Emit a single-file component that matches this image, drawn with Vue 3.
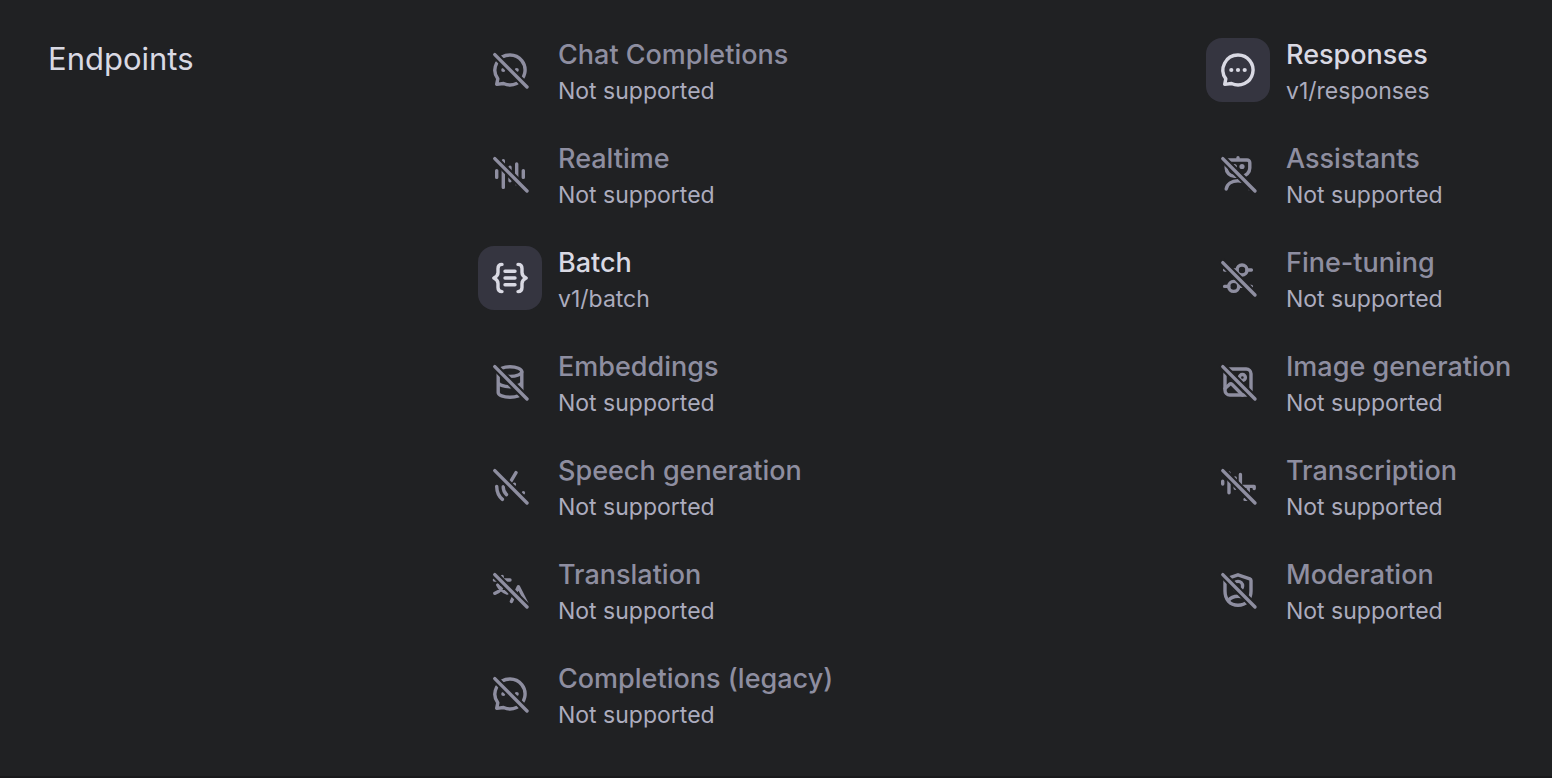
<script setup>
const chat =
  '<path d="M20 5A15 15 0 1 1 13.5 33.5L6.7 34.4L7.8 28.8A15 15 0 0 1 20 5Z"/>' +
  '<g class="solid"><circle cx="13.3" cy="20" r="2.1"/><circle cx="20" cy="20" r="2.1"/><circle cx="26.7" cy="20" r="2.1"/></g>'

const icons = {
  chat,
  realtime: '<path d="M6.7 16.6v6.8M13.3 6.6v26.8M20 13.3v13.4M26.7 9.9v20.2M33.3 16.6v6.8"/>',
  batch:
    '<path d="M12 6.4C9.4 6.4 8 8 8 10.5V14.5C8 17.5 6 19 3.8 20C6 21 8 22.5 8 25.5V29.5C8 32 9.4 33.6 12 33.6"/>' +
    '<path d="M28 6.4C30.6 6.4 32 8 32 10.5V14.5C32 17.5 34 19 36.2 20C34 21 32 22.5 32 25.5V29.5C32 32 30.6 33.6 28 33.6"/>' +
    '<path d="M15 13.3H25M15 20H25M15 26.7H25"/>',
  embeddings:
    '<ellipse cx="20" cy="9.6" rx="11.8" ry="4.8"/>' +
    '<path d="M8.2 10V30.4C8.2 33.2 13.5 35.2 20 35.2S31.8 33.2 31.8 30.4V10M8.2 20C8.2 22.8 13.5 24.8 20 24.8S31.8 22.8 31.8 20"/>',
  speech:
    '<path d="M6.7 20.4C6.8 25.6 8.8 30.4 12.4 33.4M13.2 20.8C13.2 24 14.4 26.8 16.5 28.6M26 6.6L20.8 15.4M24.4 18.2V18.6M33.4 26.6V27"/>',
  translation:
    '<path d="M4.4 10H20M12.2 6.4V10M7.8 15C9.8 19 12.8 21.8 17.2 23M14.4 10C13.6 15.5 11 21.4 4.8 23.3M21.4 31.4L28.4 16.8L36.6 33M24.4 27.4H33"/>',
  assistants:
    '<path d="M20 3.8V6M11 6H29A2.8 2.8 0 0 1 31.8 8.8V14A8.2 8.2 0 0 1 23.6 22.2H16.4A8.2 8.2 0 0 1 8.2 14V8.8A2.8 2.8 0 0 1 11 6M8.2 35C9 30 13.4 26.8 20 26.8S31 30 31.8 35"/>' +
    '<g class="solid"><circle cx="16.3" cy="12.5" r="2.6"/><circle cx="24" cy="12.5" r="2.6"/></g>',
  tuning:
    '<circle cx="24" cy="12" r="5"/><circle cx="15.7" cy="28.4" r="5"/><path d="M6.6 12H19M29 12H33.4M6.6 28.4H10.7M20.7 28.4H33.4"/>',
  image:
    '<rect x="7" y="7" width="26" height="26" rx="4.8"/><circle cx="24.4" cy="15.5" r="3"/>' +
    '<path d="M7 26.4L11.4 22.4Q12.8 21.2 14.2 22.5L24.5 33"/>',
  transcription:
    '<path d="M4.7 15.3V18.1M11 7V26.7M17.2 12V22.2M22.4 8.4V18M23.5 20.4H36.2V22.6M30.2 20.4V33.4M27 33.4H33"/>',
  moderation:
    '<path d="M20 4.8L31.8 8.8Q33 9.3 33 10.6V21C33 29.6 28 35.2 20 35.2S7 29.6 7 21V10.6Q7 9.3 8.2 8.8Z"/>' +
    '<circle cx="20" cy="16" r="4.6"/><path d="M10.4 30.6C12.4 27.8 15.6 26.3 20 26.3S27.6 27.8 29.6 30.6"/>',
}

const endpoints = [
  { name: 'Chat Completions', icon: 'chat' },
  { name: 'Responses', icon: 'chat', path: 'v1/responses' },
  { name: 'Realtime', icon: 'realtime' },
  { name: 'Assistants', icon: 'assistants' },
  { name: 'Batch', icon: 'batch', path: 'v1/batch' },
  { name: 'Fine-tuning', icon: 'tuning' },
  { name: 'Embeddings', icon: 'embeddings' },
  { name: 'Image generation', icon: 'image' },
  { name: 'Speech generation', icon: 'speech' },
  { name: 'Transcription', icon: 'transcription' },
  { name: 'Translation', icon: 'translation' },
  { name: 'Moderation', icon: 'moderation' },
  { name: 'Completions (legacy)', icon: 'chat' },
]
</script>

<template>
  <section class="section">
    <h2 class="heading">Endpoints</h2>
    <ul class="list">
      <li v-for="e in endpoints" :key="e.name" class="item" :class="{ active: e.path }">
        <span class="tile">
          <svg class="icon" viewBox="0 0 40 40" aria-hidden="true">
            <g v-html="icons[e.icon]"></g>
            <template v-if="!e.path">
              <path class="gap" d="M4.8 4.6L37 37" />
              <path d="M4.8 4.6L37 37" />
            </template>
          </svg>
        </span>
        <div class="text">
          <div class="name">{{ e.name }}</div>
          <div class="detail">{{ e.path || 'Not supported' }}</div>
        </div>
      </li>
    </ul>
  </section>
</template>

<style>
body {
  background: #202123;
}
</style>

<style scoped>
.section {
  display: grid;
  grid-template-columns: 430px 1fr;
  padding: 38px 0 42px 48px;
  border-bottom: 2px solid #19191b;
  background: #202123;
  font-family: Inter, "Liberation Sans", sans-serif;
}
.heading {
  margin: 0;
  font-size: 31px;
  line-height: 42px;
  font-weight: 400;
  color: #d9d9e3;
}
.list {
  display: grid;
  grid-template-columns: 1fr 346px;
  row-gap: 32px;
  margin: 0;
  padding: 0;
  list-style: none;
}
.item {
  display: flex;
  align-items: flex-start;
  gap: 16px;
  color: #8e8ea0;
}
.tile {
  display: flex;
  align-items: center;
  justify-content: center;
  flex: none;
  width: 64px;
  height: 64px;
  border-radius: 16px;
}
.icon {
  width: 40px;
  height: 40px;
  fill: none;
  stroke: currentColor;
  stroke-width: 3.4;
  stroke-linecap: round;
  stroke-linejoin: round;
}
.icon :deep(.solid) {
  fill: currentColor;
  stroke: none;
}
.gap {
  stroke: #202123;
  stroke-width: 7.6;
}
.name {
  font-size: 27px;
  line-height: 34px;
  font-weight: 500;
  white-space: nowrap;
}
.detail {
  font-size: 23px;
  line-height: 38px;
  color: #acacbe;
}
.active {
  color: #d9d9e3;
}
.active .tile {
  background: #353540;
}
.active .name {
  color: #d9d9e3;
}
</style>
